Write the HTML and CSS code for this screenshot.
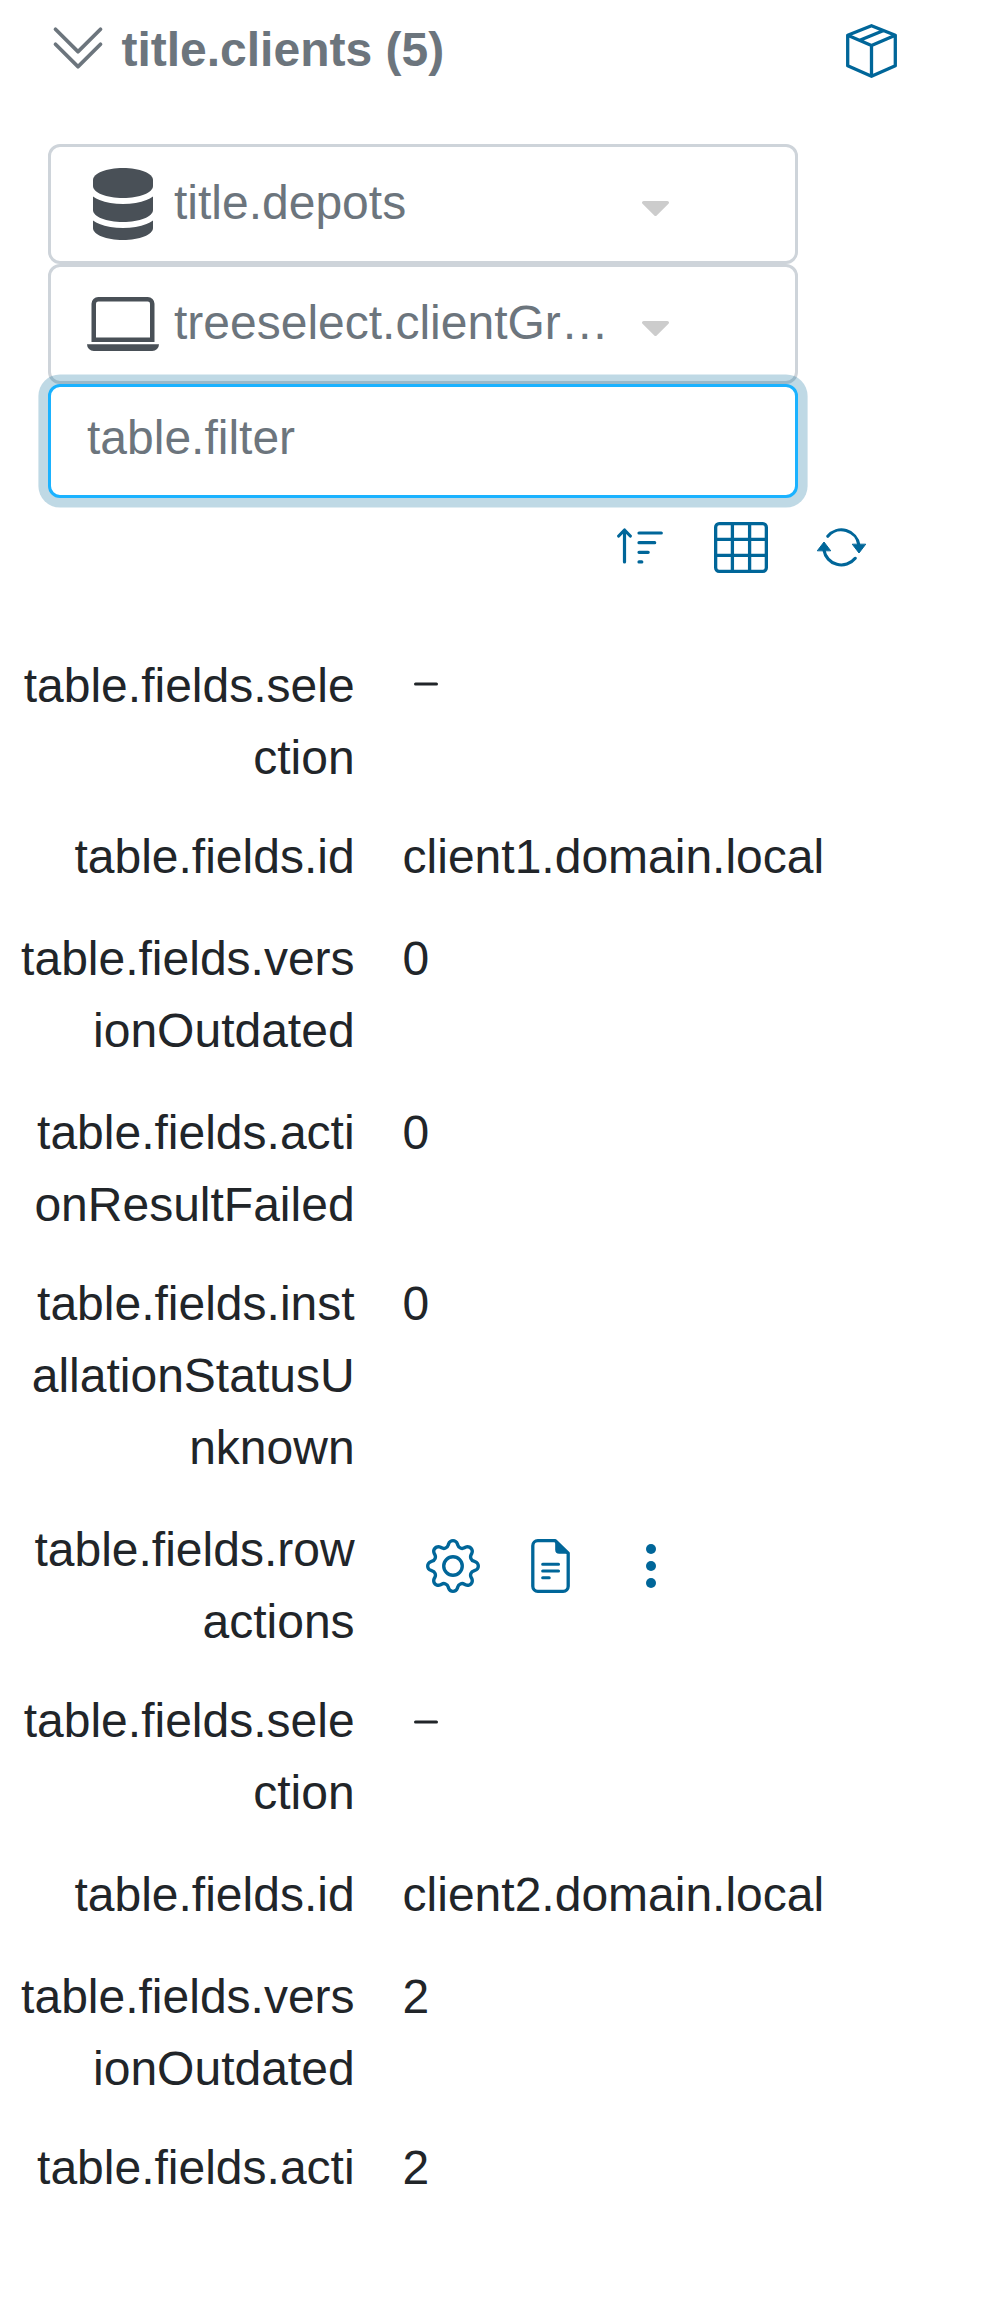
FILE: index.html
```
<!DOCTYPE html>
<html lang="en">
<head>
<meta charset="utf-8">
<title>title.clients</title>
<link rel="stylesheet" href="styles.css">
</head>
<body>
<svg class="defs" aria-hidden="true">
  <symbol id="dash" viewBox="0 0 48 48"><path d="M13.500 24H34.500" fill="none" stroke="currentColor" stroke-width="3" stroke-linecap="round"/></symbol>
  <symbol id="caret" viewBox="0 0 292.362 292.362"><path fill="currentColor" d="M286.935 69.377c-3.614-3.617-7.898-5.424-12.848-5.424H18.274c-4.952 0-9.233 1.807-12.850 5.424C1.807 72.998 0 77.279 0 82.228c0 4.948 1.807 9.229 5.424 12.847l127.907 127.907c3.621 3.617 7.902 5.428 12.850 5.428s9.233-1.811 12.847-5.428L286.935 95.074c3.613-3.617 5.427-7.898 5.427-12.847 0-4.948-1.814-9.229-5.427-12.850z"/></symbol>
</svg>
<header class="head">
  <svg class="chevrons" viewBox="0 0 16 16" fill="currentColor"><path d="M1.646 6.646a.5.5 0 0 1 .708 0L8 12.293l5.646-5.647a.5.5 0 0 1 .708.708l-6 6a.5.5 0 0 1-.708 0l-6-6a.5.5 0 0 1 0-.708z"/><path d="M1.646 2.646a.5.5 0 0 1 .708 0L8 8.293l5.646-5.647a.5.5 0 0 1 .708.708l-6 6a.5.5 0 0 1-.708 0l-6-6a.5.5 0 0 1 0-.708z"/></svg>
  <h1 class="title">title.clients (5)</h1>
  <svg class="box" viewBox="0 0 51 54" fill="none" stroke="currentColor" stroke-width="3.3" stroke-linejoin="round"><path d="M25.500 1.700L49.300 11.200V41.800L25.500 52.300L1.700 41.800V11.200ZM1.700 11.200L25.500 21.400L49.300 11.200M25.500 21.400V52M37 6.700L13.800 16.200"/></svg>
</header>
<section class="filters">
  <div class="select">
    <svg class="select-icon" viewBox="0 0 16 16" fill="currentColor"><path d="M1.333 2.667C1.333 1.194 4.318 0 8 0s6.667 1.194 6.667 2.667V4c0 1.473-2.985 2.667-6.667 2.667S1.333 5.473 1.333 4V2.667z"/><path d="M1.333 6.334v3C1.333 10.805 4.318 12 8 12s6.667-1.194 6.667-2.667V6.334a6.510 6.510 0 0 1-1.458.79C11.810 7.684 9.967 8 8 8c-1.966 0-3.809-.317-5.208-.876a6.508 6.508 0 0 1-1.458-.79z"/><path d="M14.667 11.668a6.510 6.510 0 0 1-1.458.789c-1.400.56-3.242.876-5.210.876-1.966 0-3.809-.316-5.208-.876a6.510 6.510 0 0 1-1.458-.79v1.666C1.333 14.806 4.318 16 8 16s6.667-1.194 6.667-2.667v-1.665z"/></svg>
    <span class="select-text">title.depots</span>
    <svg class="caret"><use href="#caret"/></svg>
  </div>
  <div class="select">
    <svg class="select-icon" viewBox="0 0 16 16" fill="currentColor"><path d="M13.500 3a.5.5 0 0 1 .5.5V11H2V3.500a.5.5 0 0 1 .5-.5h11zm-11-1A1.500 1.500 0 0 0 1 3.500V12h14V3.500A1.500 1.500 0 0 0 13.500 2h-11zM0 12.500h16a1.500 1.500 0 0 1-1.500 1.500h-13A1.500 1.500 0 0 1 0 12.500z"/></svg>
    <span class="select-text">treeselect.clientGr…</span>
    <svg class="caret"><use href="#caret"/></svg>
  </div>
  <input class="filter" type="text" placeholder="table.filter">
</section>
<div class="tools">
  <svg class="sort" viewBox="0 0 46 36" fill="none" stroke="currentColor" stroke-width="3.2" stroke-linecap="round" stroke-linejoin="round"><path d="M7.500 34V2M1.700 8L7.500 2L13.300 8M22 5H44.300M22 14.700H37.700M22 24.300H31.200M22 33.900H24.800"/></svg>
  <svg class="grid" viewBox="0 0 54 51" fill="none" stroke="currentColor" stroke-width="3.3"><rect x="1.650" y="1.650" width="50.700" height="47.700" rx="3.500"/><path d="M18.400 1V50M35.600 1V50M1 17.400H53M1 33.400H53"/></svg>
  <svg class="refresh" viewBox="0 0 49 39" fill="none" stroke="currentColor" stroke-width="3.1" stroke-linecap="round"><path d="M10.800 8.300A17.700 17.700 0 0 1 41.900 17M38.200 30.300A17.700 17.700 0 0 1 6.900 22"/><path d="M.5 22.500L7 14L13.500 22.500ZM35.500 16.500L42 25L48.500 16.500Z" fill="currentColor" stroke-width="1"/></svg>
</div>
<main class="table">
  <div class="row"><div class="label">table.fields.sele<br>ction</div><div class="value"><svg class="dash"><use href="#dash"/></svg></div></div>
  <div class="row tall"><div class="label">table.fields.id</div><div class="value">client1.domain.local</div></div>
  <div class="row tall"><div class="label">table.fields.vers<br>ionOutdated</div><div class="value">0</div></div>
  <div class="row"><div class="label">table.fields.acti<br>onResultFailed</div><div class="value">0</div></div>
  <div class="row tall"><div class="label">table.fields.inst<br>allationStatusU<br>nknown</div><div class="value">0</div></div>
  <div class="row"><div class="label">table.fields.row<br>actions</div><div class="value actions">
    <svg class="gear" viewBox="0 0 16 16" fill="currentColor"><path d="M8 4.754a3.246 3.246 0 1 0 0 6.492 3.246 3.246 0 0 0 0-6.492zM5.754 8a2.246 2.246 0 1 1 4.492 0 2.246 2.246 0 0 1-4.492 0z"/><path d="M9.796 1.343c-.527-1.790-3.065-1.790-3.592 0l-.094.319a.873.873 0 0 1-1.255.52l-.292-.16c-1.640-.892-3.433.902-2.540 2.541l.159.292a.873.873 0 0 1-.52 1.255l-.319.094c-1.790.527-1.790 3.065 0 3.592l.319.094a.873.873 0 0 1 .52 1.255l-.16.292c-.892 1.640.901 3.434 2.541 2.540l.292-.159a.873.873 0 0 1 1.255.52l.094.319c.527 1.790 3.065 1.790 3.592 0l.094-.319a.873.873 0 0 1 1.255-.52l.292.16c1.640.893 3.434-.902 2.540-2.541l-.159-.292a.873.873 0 0 1 .52-1.255l.319-.094c1.790-.527 1.790-3.065 0-3.592l-.319-.094a.873.873 0 0 1-.52-1.255l.16-.292c.893-1.640-.902-3.433-2.541-2.540l-.292.159a.873.873 0 0 1-1.255-.52l-.094-.319zm-2.633.283c.246-.835 1.428-.835 1.674 0l.094.319a1.873 1.873 0 0 0 2.693 1.115l.291-.16c.764-.415 1.600.42 1.184 1.185l-.159.292a1.873 1.873 0 0 0 1.116 2.692l.318.094c.835.246.835 1.428 0 1.674l-.319.094a1.873 1.873 0 0 0-1.115 2.693l.16.291c.415.764-.42 1.600-1.185 1.184l-.291-.159a1.873 1.873 0 0 0-2.693 1.116l-.094.318c-.246.835-1.428.835-1.674 0l-.094-.319a1.873 1.873 0 0 0-2.692-1.115l-.292.16c-.764.415-1.600-.42-1.184-1.185l.159-.291A1.873 1.873 0 0 0 1.945 8.930l-.319-.094c-.835-.246-.835-1.428 0-1.674l.319-.094A1.873 1.873 0 0 0 3.060 4.377l-.16-.292c-.415-.764.42-1.600 1.185-1.184l.292.159a1.873 1.873 0 0 0 2.692-1.115l.094-.319z"/></svg>
    <svg class="doc" viewBox="0 0 39 54" fill="none" stroke="currentColor" stroke-width="3.3" stroke-linecap="round" stroke-linejoin="round"><path d="M24.300 1.700H6.800A5 5 0 0 0 1.800 6.700V47.300A5 5 0 0 0 6.800 52.300H32.200A5 5 0 0 0 37.200 47.300V14.300Z"/><path d="M24.200 1V10.700A4 4 0 0 0 28.200 14.700H38Z" fill="currentColor" stroke="none"/><path d="M11.700 25.300H27.500M11.700 32H27.500M11.700 38.800H18.200" stroke-width="3.100"/></svg>
    <svg class="dots" viewBox="0 0 10 44" fill="currentColor"><circle cx="5" cy="5" r="5"/><circle cx="5" cy="22" r="5"/><circle cx="5" cy="39" r="5"/></svg>
  </div></div>
  <div class="row tall"><div class="label">table.fields.sele<br>ction</div><div class="value"><svg class="dash dash-low"><use href="#dash"/></svg></div></div>
  <div class="row tall"><div class="label">table.fields.id</div><div class="value">client2.domain.local</div></div>
  <div class="row"><div class="label">table.fields.vers<br>ionOutdated</div><div class="value">2</div></div>
  <div class="row"><div class="label">table.fields.acti</div><div class="value">2</div></div>
</main>
</body>
</html>
```
FILE: styles.css
```
* { box-sizing: border-box; }
body {
  margin: 0;
  background: #fff;
  color: #212529;
  font: 48px/72px "Liberation Sans", Arial, sans-serif;
}
svg { display: block; flex: none; }
.defs { position: absolute; width: 0; height: 0; }
.head {
  display: flex;
  align-items: flex-start;
  height: 144px;
  padding: 14px 87px 0 48px;
  color: #6c757d;
}
.chevrons { width: 60px; height: 60px; margin-top: 4px; }
.title { margin: 0 0 0 13.4px; font-size: 48px; line-height: 72px; font-weight: 700; }
.box { width: 51px; height: 54px; margin: 10px 0 0 auto; color: #069; }
.filters { display: flex; flex-direction: column; width: 750px; margin-left: 48px; }
.select {
  display: flex;
  align-items: flex-start;
  height: 120px;
  padding: 21px 36px 0;
  border: 3px solid #ced4da;
  border-radius: 12px;
  color: #6c757d;
}
.select-icon { width: 72px; height: 72px; color: #495057; }
.select-text { width: 453px; margin: -1px 0 0 15px; white-space: nowrap; }
.caret { width: 27px; height: 27px; margin: 27px 0 0 15px; color: #ccc; }
.filter {
  display: block;
  position: relative;
  width: 100%;
  height: 114px;
  padding: 14px 36px 22px;
  border: 3px solid #1ab2ff;
  border-radius: 12px;
  outline: 0;
  background: #fff;
  box-shadow: 0 0 0 9.6px rgba(0, 102, 153, .25);
  font: inherit;
}
.filter::placeholder { color: #6c757d; opacity: 1; }
.tools { display: flex; align-items: flex-start; height: 152px; padding: 24px 0 0 617px; color: #069; }
.sort { width: 46px; height: 36px; margin-top: 6px; }
.grid { width: 54px; height: 51px; margin-left: 51px; }
.refresh { width: 49px; height: 39px; margin: 6px 0 0 49px; }
.row { display: grid; grid-template-columns: 354.6px 1fr; column-gap: 48px; padding-bottom: 27px; }
.tall { padding-bottom: 30px; }
.label { text-align: right; white-space: nowrap; }
.dash { width: 48px; height: 48px; margin: 10px 0 0 -.6px; }
.dash-low { margin-top: 13px; }
.actions { display: flex; align-items: flex-start; padding: 25px 0 0 23.4px; color: #069; }
.gear { width: 54px; height: 54px; }
.doc { width: 39px; height: 54px; margin-left: 51px; }
.dots { width: 10px; height: 44px; margin: 5px 0 0 76px; }
```
